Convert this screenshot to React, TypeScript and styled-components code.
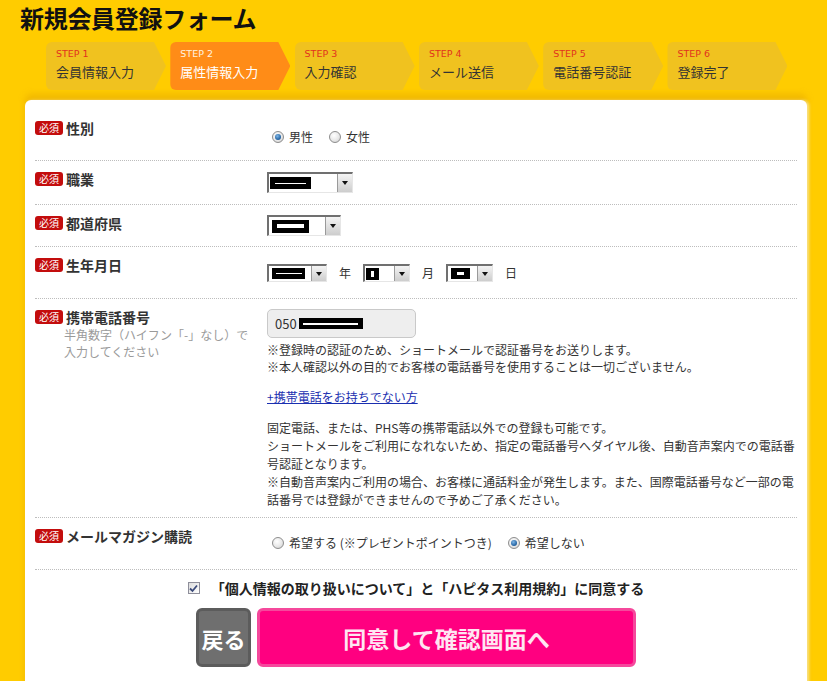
import React from "react";
import styled, { createGlobalStyle, css } from "styled-components";

const GlobalStyle = createGlobalStyle`
  html, body {
    margin: 0;
    padding: 0;
    background: #ffcc00;
    overflow: hidden;
  }
  body {
    font-family: "Noto Sans CJK JP", "Noto Sans", sans-serif;
    color: #333;
  }
  * { box-sizing: border-box; }
`;

const Page = styled.div`
  width: 827px;
  height: 681px;
  overflow: hidden;
`;

const Title = styled.h1`
  margin: 0;
  padding-left: 20px;
  font-size: 24px;
  line-height: 35px;
  font-weight: 700;
  color: #111;
  letter-spacing: -0.3px;
`;

const Steps = styled.ol`
  list-style: none;
  display: flex;
  gap: 4.3px;
  margin: 7px 0 0 46px;
  padding: 0;
`;

const Step = styled.li<{ $active?: boolean }>`
  width: 120px;
  height: 48px;
  border-radius: 6px;
  padding: 6px 0 0 10px;
  background: ${(p) => (p.$active ? "#ff8c17" : "#f0c21f")};
  clip-path: polygon(0 0, calc(100% - 12px) 0, 100% 50%, calc(100% - 12px) 100%, 0 100%);
  display: flex;
  flex-direction: column;
`;

const StepNo = styled.span<{ $active?: boolean }>`
  font-family: "DejaVu Sans", sans-serif;
  font-size: 9.5px;
  line-height: 12px;
  color: ${(p) => (p.$active ? "#fff3e0" : "#e2321e")};
  margin-bottom: 3px;
`;

const StepName = styled.span<{ $active?: boolean }>`
  font-size: 13px;
  line-height: 17px;
  color: ${(p) => (p.$active ? "#fff" : "#333")};
  white-space: nowrap;
`;

const Panel = styled.section`
  margin: 10px 20px 0 25px;
  background: #fff;
  border-radius: 6px 6px 0 0;
  padding: 10px 10px 30px 10px;
  box-shadow: 0 -6px 6px rgba(214, 150, 0, 0.35), 2px 0 3px rgba(255, 250, 200, 0.8);
  min-height: 600px;
`;

const Row = styled.div<{ $pb: number }>`
  display: grid;
  grid-template-columns: 232px 1fr;
  padding: 9px 0 ${(p) => p.$pb}px;
  border-bottom: 1px dotted #bdbdbd;
`;

const LabelCell = styled.div`
  display: flex;
  flex-direction: column;
`;

const LabelLine = styled.div`
  display: flex;
  align-items: center;
  gap: 3px;
  font-size: 14px;
  line-height: 18px;
  font-weight: 700;
  color: #333;
`;

const Badge = styled.span`
  display: inline-block;
  height: 14px;
  line-height: 14px;
  padding: 0 4px;
  border-radius: 3px;
  background: #c30d0d;
  color: #fff;
  font-size: 10px;
  font-weight: 400;
`;

const SubNote = styled.div`
  margin-left: 29px;
  font-size: 12px;
  line-height: 17px;
  color: #9a9a9a;
`;

const Control = styled.div<{ $offset: number }>`
  margin-top: ${(p) => p.$offset}px;
  font-size: 12px;
  color: #333;
`;

const RadioGroup = styled.div`
  display: flex;
  align-items: center;
  height: 20px;
  padding-left: 5px;
`;

const RadioItem = styled.label`
  display: flex;
  align-items: center;
  gap: 5px;
  margin-right: 16px;
  font-size: 12px;
  line-height: 20px;
  white-space: nowrap;
`;

const RadioMark = styled.span<{ $checked?: boolean }>`
  width: 12px;
  height: 12px;
  border-radius: 50%;
  border: 1px solid #8d8d8d;
  background: radial-gradient(circle at 40% 35%, #ffffff 0, #e8e8e8 55%, #c9c9c9 100%);
  display: flex;
  align-items: center;
  justify-content: center;
  ${(p) =>
    p.$checked &&
    css`
      &::after {
        content: "";
        width: 6px;
        height: 6px;
        border-radius: 50%;
        background: radial-gradient(circle at 40% 35%, #7fb6e6 0, #2a6aa8 60%, #174a7e 100%);
      }
    `}
`;

const Inline = styled.div`
  display: flex;
  align-items: center;
`;

const Unit = styled.span`
  margin: 0 12px;
  font-size: 12px;
  line-height: 18px;
`;

const SelectBox = styled.div<{ $w: number; $h: number }>`
  width: ${(p) => p.$w}px;
  height: ${(p) => p.$h}px;
  display: flex;
  background: #fff;
  border-top: 2px solid #707070;
  border-left: 2px solid #707070;
  border-right: 1px solid #e6e6e6;
  border-bottom: 1px solid #e6e6e6;
`;

const SelectValue = styled.div`
  flex: 1;
  display: flex;
  align-items: center;
  padding-left: 1px;
`;

const SelectArrow = styled.div`
  width: 15px;
  border-left: 1px solid #9a9a9a;
  background: linear-gradient(#f4f4f4, #cdcdcd);
  display: flex;
  align-items: center;
  justify-content: center;
  &::after {
    content: "";
    border-left: 3.5px solid transparent;
    border-right: 3.5px solid transparent;
    border-top: 4px solid #111;
  }
`;

const Redact = styled.span<{ $w: number; $h: number; $ml?: number }>`
  display: inline-flex;
  align-items: center;
  justify-content: center;
  width: ${(p) => p.$w}px;
  height: ${(p) => p.$h}px;
  margin-left: ${(p) => p.$ml ?? 0}px;
  background: #000;
`;

const RedactBar = styled.span<{ $w: number; $h: number }>`
  display: block;
  width: ${(p) => p.$w}px;
  height: ${(p) => p.$h}px;
  background: #fff;
`;

const PhoneBox = styled.div`
  width: 149px;
  height: 29px;
  border: 1px solid #c9c9c9;
  border-radius: 5px;
  background: #eeeeee;
  display: flex;
  align-items: center;
  padding-left: 7px;
  font-size: 13px;
  color: #333;
`;

const NoteList = styled.div`
  margin-top: 3px;
  font-size: 12px;
  line-height: 17px;
`;

const LinkText = styled.a`
  display: inline-block;
  margin-top: 13px;
  font-size: 12px;
  line-height: 18px;
  color: #1a2fb0;
  text-decoration: underline;
`;

const Paragraph = styled.p`
  margin: 13px 0 0;
  font-size: 12px;
  line-height: 18px;
  word-break: break-all;
`;

const AgreeRow = styled.label`
  display: flex;
  justify-content: center;
  align-items: center;
  gap: 11px;
  padding-top: 8px;
  font-size: 14px;
  line-height: 20px;
  font-weight: 700;
  color: #222;
`;

const CheckMark = styled.span`
  width: 12px;
  height: 12px;
  border: 1px solid #8e8e9a;
  background: linear-gradient(135deg, #dcdcdc, #ffffff);
  display: flex;
  align-items: center;
  justify-content: center;
`;

const ButtonRow = styled.div`
  display: flex;
  justify-content: center;
  gap: 6px;
  margin-top: 10px;
`;

const Button = styled.button<{ $variant: "back" | "primary" }>`
  height: 59px;
  border-radius: 6px;
  font-family: "Noto Sans CJK JP", sans-serif;
  font-weight: 700;
  font-size: 22px;
  cursor: pointer;
  padding: 0;
  ${(p) =>
    p.$variant === "back"
      ? css`
          width: 55px;
          background: #6f6f6f;
          border: 3px solid #5c5c5c;
          color: #fff;
        `
      : css`
          width: 379px;
          background: #ff0080;
          border: 3px solid #f5489c;
          color: #ffe6f2;
          font-size: 23px;
        `}
`;

type SelProps = { w: number; h: number; children: React.ReactNode };
const FakeSelect = ({ w, h, children }: SelProps) => (
  <SelectBox $w={w} $h={h}>
    <SelectValue>{children}</SelectValue>
    <SelectArrow />
  </SelectBox>
);

const Radio = ({ checked, label }: { checked?: boolean; label: string }) => (
  <RadioItem>
    <RadioMark $checked={checked} role="radio" aria-checked={!!checked} />
    {label}
  </RadioItem>
);

const Label = ({ children }: { children: React.ReactNode }) => (
  <LabelLine>
    <Badge>必須</Badge>
    {children}
  </LabelLine>
);

const steps = [
  { no: "STEP 1", name: "会員情報入力" },
  { no: "STEP 2", name: "属性情報入力", active: true },
  { no: "STEP 3", name: "入力確認" },
  { no: "STEP 4", name: "メール送信" },
  { no: "STEP 5", name: "電話番号認証" },
  { no: "STEP 6", name: "登録完了" },
];

export default function App() {
  return (
    <Page>
      <GlobalStyle />
      <Title>新規会員登録フォーム</Title>
      <Steps>
        {steps.map((s) => (
          <Step key={s.no} $active={s.active}>
            <StepNo $active={s.active}>{s.no}</StepNo>
            <StepName $active={s.active}>{s.name}</StepName>
          </Step>
        ))}
      </Steps>
      <Panel>
        <Row $pb={13}>
          <LabelCell>
            <Label>性別</Label>
          </LabelCell>
          <Control $offset={8}>
            <RadioGroup>
              <Radio checked label="男性" />
              <Radio label="女性" />
            </RadioGroup>
          </Control>
        </Row>

        <Row $pb={11}>
          <LabelCell>
            <Label>職業</Label>
          </LabelCell>
          <Control $offset={2}>
            <FakeSelect w={86} h={21}>
              <Redact $w={41} $h={12}>
                <RedactBar $w={31} $h={1} />
              </Redact>
            </FakeSelect>
          </Control>
        </Row>

        <Row $pb={10}>
          <LabelCell>
            <Label>都道府県</Label>
          </LabelCell>
          <Control $offset={1}>
            <FakeSelect w={74} h={21}>
              <Redact $w={37} $h={13} $ml={2}>
                <RedactBar $w={27} $h={4} />
              </Redact>
            </FakeSelect>
          </Control>
        </Row>

        <Row $pb={16}>
          <LabelCell>
            <Label>生年月日</Label>
          </LabelCell>
          <Control $offset={8}>
            <Inline>
              <FakeSelect w={60} h={18}>
                <Redact $w={33} $h={11} $ml={2}>
                  <RedactBar $w={26} $h={1} />
                </Redact>
              </FakeSelect>
              <Unit>年</Unit>
              <FakeSelect w={47} h={18}>
                <Redact $w={13} $h={12}>
                  <RedactBar $w={3} $h={6} />
                </Redact>
              </FakeSelect>
              <Unit>月</Unit>
              <FakeSelect w={47} h={18}>
                <Redact $w={19} $h={11} $ml={2}>
                  <RedactBar $w={7} $h={3} />
                </Redact>
              </FakeSelect>
              <Unit>日</Unit>
            </Inline>
          </Control>
        </Row>

        <Row $pb={8}>
          <LabelCell>
            <Label>携帯電話番号</Label>
            <SubNote>
              半角数字（ハイフン「-」なし）で
              <br />
              入力してください
            </SubNote>
          </LabelCell>
          <Control $offset={1}>
            <PhoneBox>
              050
              <Redact $w={64} $h={11} $ml={2}>
                <RedactBar $w={55} $h={2} />
              </Redact>
            </PhoneBox>
            <NoteList>
              <div>※登録時の認証のため、ショートメールで認証番号をお送りします。</div>
              <div>※本人確認以外の目的でお客様の電話番号を使用することは一切ございません。</div>
            </NoteList>
            <LinkText href="#">+携帯電話をお持ちでない方</LinkText>
            <Paragraph>
              固定電話、または、PHS等の携帯電話以外での登録も可能です。
              <br />
              ショートメールをご利用になれないため、指定の電話番号へダイヤル後、自動音声案内での電話番号認証となります。
              <br />
              ※自動音声案内ご利用の場合、お客様に通話料金が発生します。また、国際電話番号など一部の電話番号では登録ができませんので予めご了承ください。
            </Paragraph>
          </Control>
        </Row>

        <Row $pb={16}>
          <LabelCell>
            <Label>メールマガジン購読</Label>
          </LabelCell>
          <Control $offset={6}>
            <RadioGroup>
              <Radio label="希望する (※プレゼントポイントつき)" />
              <Radio checked label="希望しない" />
            </RadioGroup>
          </Control>
        </Row>

        <AgreeRow>
          <CheckMark role="checkbox" aria-checked="true">
            <svg width="9" height="9" viewBox="0 0 9 9">
              <path d="M1 4.5 L3.5 7 L8 1.5" fill="none" stroke="#3b4a7a" strokeWidth="1.8" />
            </svg>
          </CheckMark>
          「個人情報の取り扱いについて」と「ハピタス利用規約」に同意する
        </AgreeRow>

        <ButtonRow>
          <Button $variant="back">戻る</Button>
          <Button $variant="primary">同意して確認画面へ</Button>
        </ButtonRow>
      </Panel>
    </Page>
  );
}
